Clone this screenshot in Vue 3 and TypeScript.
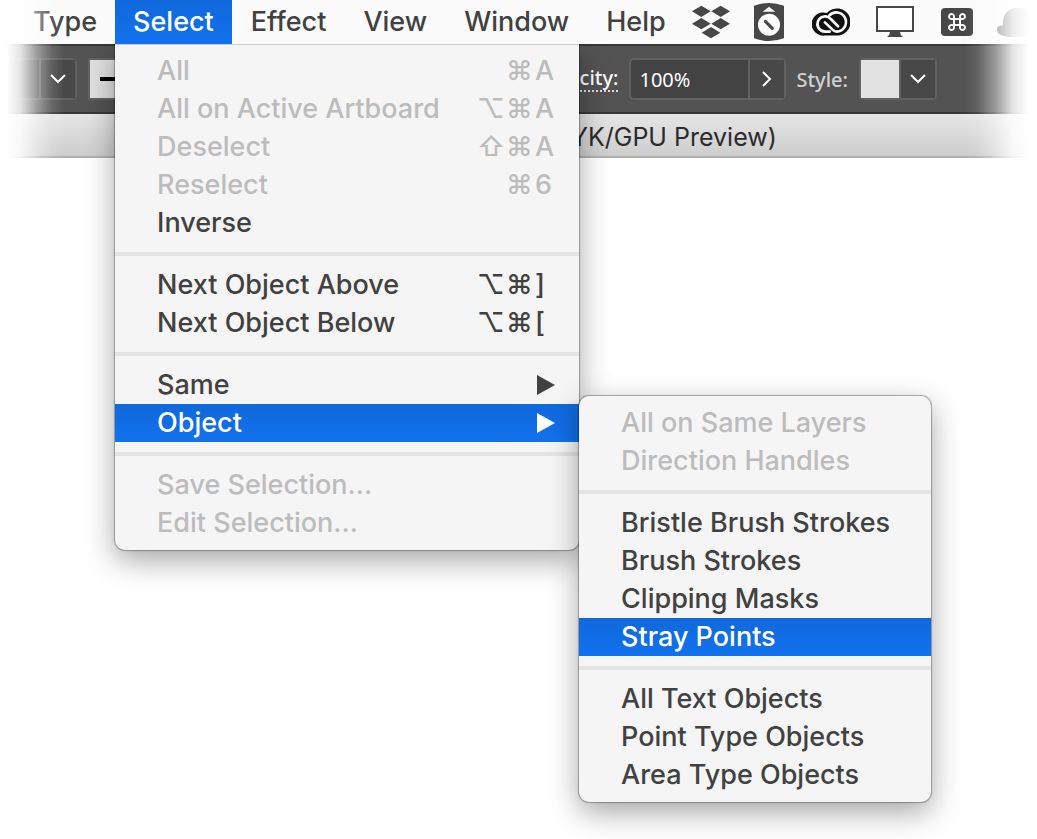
<script setup lang="ts">
interface Entry {
  label: string
  enabled: boolean
  active?: boolean
  shortcut?: string[]
  submenu?: Entry[][]
  opens?: boolean
}

const objectMenu: Entry[][] = [
  [
    { label: 'All on Same Layers', enabled: false },
    { label: 'Direction Handles', enabled: false },
  ],
  [
    { label: 'Bristle Brush Strokes', enabled: true },
    { label: 'Brush Strokes', enabled: true },
    { label: 'Clipping Masks', enabled: true },
    { label: 'Stray Points', enabled: true, active: true },
  ],
  [
    { label: 'All Text Objects', enabled: true },
    { label: 'Point Type Objects', enabled: true },
    { label: 'Area Type Objects', enabled: true },
  ],
]

const selectMenu: Entry[][] = [
  [
    { label: 'All', enabled: false, shortcut: ['⌘', 'A'] },
    { label: 'All on Active Artboard', enabled: false, shortcut: ['⌥', '⌘', 'A'] },
    { label: 'Deselect', enabled: false, shortcut: ['⇧', '⌘', 'A'] },
    { label: 'Reselect', enabled: false, shortcut: ['⌘', '6'] },
    { label: 'Inverse', enabled: true },
  ],
  [
    { label: 'Next Object Above', enabled: true, shortcut: ['⌥', '⌘', ']'] },
    { label: 'Next Object Below', enabled: true, shortcut: ['⌥', '⌘', '['] },
  ],
  [
    { label: 'Same', enabled: true, opens: true },
    { label: 'Object', enabled: true, active: true, opens: true, submenu: objectMenu },
  ],
  [
    { label: 'Save Selection...', enabled: false },
    { label: 'Edit Selection...', enabled: false },
  ],
]

const titles: string[] = ['Type', 'Select', 'Effect', 'View', 'Window', 'Help']
</script>

<template>
  <div class="screen">
    <header class="chrome">
      <nav class="menubar">
        <ul class="titles">
          <li v-for="title in titles" :key="title" class="title-item">
            <button type="button" class="title" :class="{ open: title === 'Select' }">{{ title }}</button>
            <div v-if="title === 'Select'" class="menu dropdown">
              <ul v-for="(group, g) in selectMenu" :key="g" class="group">
                <li v-for="entry in group" :key="entry.label" class="entry">
                  <button type="button" class="row" :class="{ active: entry.active }" :disabled="!entry.enabled">
                    <span>{{ entry.label }}</span>
                    <span v-if="entry.shortcut" class="keys">
                      <kbd v-for="key in entry.shortcut" :key="key" class="key">{{ key }}</kbd>
                    </span>
                    <svg v-if="entry.opens" class="arrow" viewBox="0 0 18 20" aria-hidden="true">
                      <path d="M0 0L18 10L0 20Z" />
                    </svg>
                  </button>
                  <div v-if="entry.submenu" class="menu submenu">
                    <ul v-for="(subgroup, s) in entry.submenu" :key="s" class="group">
                      <li v-for="sub in subgroup" :key="sub.label" class="entry">
                        <button type="button" class="row" :class="{ active: sub.active }" :disabled="!sub.enabled">
                          <span>{{ sub.label }}</span>
                        </button>
                      </li>
                    </ul>
                  </div>
                </li>
              </ul>
            </div>
          </li>
        </ul>
        <div class="status">
          <svg class="ico-box" viewBox="36 17 114 100" aria-label="Dropbox">
            <path d="M64 18L92 35L64 52L36 35ZM122 18L150 35L122 52L94 35ZM64 55L92 72L64 89L36 72ZM122 55L150 72L122 89L94 72ZM93 82L121 99L93 116L65 99Z" />
          </svg>
          <svg class="ico-timer" viewBox="222 12 90 114" aria-label="Timer">
            <path d="M222 20Q267 4 312 20V118Q267 134 222 118Z" />
            <path class="light" d="M248 38H286L267 23Z" />
            <circle class="light" cx="267" cy="77" r="33" />
            <path class="needle" d="M256 67L277 88" />
          </svg>
          <svg class="ico-cloud" viewBox="395 20 115 82" aria-label="Creative Cloud">
            <path class="ink" d="M433 102A35 35 0 1 1 440 34A41 41 0 1 1 470 102Z" />
            <path class="ring" d="M449 90H434A23 23 0 1 1 452 52L474 74" />
            <path class="ring" d="M447 42A29 29 0 1 1 470 90Q463 90 457 84L434 62" />
          </svg>
          <svg class="ico-screen" viewBox="0 0 38 32" aria-label="Display">
            <path class="frame" d="M1 1H37V25H1Z" />
            <path d="M14 26H24Q24 29 27 31H11Q14 29 14 26Z" />
          </svg>
          <svg class="ico-cmd" viewBox="0 0 32 28" aria-label="Shortcuts">
            <rect width="32" height="28" rx="4" />
            <path class="loop" d="M13 11V9A2.5 2.5 0 1 0 11 11H21A2.5 2.5 0 1 0 19 9V19A2.5 2.5 0 1 0 21 17H11A2.5 2.5 0 1 0 13 19Z" />
          </svg>
          <svg class="ico-hat" viewBox="0 0 40 31" aria-label="Bartender">
            <path d="M6 17Q6 1 21 1Q36 1 37 17L40 19V30H13Q0 29 0 23Q0 18 5 19Z" />
          </svg>
        </div>
      </nav>

      <div class="toolbar">
        <div class="stroke-tools">
          <div class="combo plain">
            <span class="blank"></span>
            <button type="button" class="drop" aria-label="Stroke weight">
              <svg class="chevron" viewBox="0 0 16 10"><path d="M1 1L8 8L15 1" /></svg>
            </button>
          </div>
          <button type="button" class="profile" aria-label="Stroke profile"><span class="dash"></span></button>
        </div>
        <div class="appearance">
          <label class="opacity" for="opacity">Opacity:</label>
          <div class="combo">
            <input id="opacity" class="value" type="text" value="100%" />
            <button type="button" class="drop" aria-label="Opacity slider">
              <svg class="angle" viewBox="0 0 10 16"><path d="M1 1L8 8L1 15" /></svg>
            </button>
          </div>
          <span class="style-label">Style:</span>
          <div class="combo">
            <span class="swatch"></span>
            <button type="button" class="drop" aria-label="Graphic style">
              <svg class="chevron" viewBox="0 0 16 10"><path d="M1 1L8 8L15 1" /></svg>
            </button>
          </div>
        </div>
      </div>

      <div class="document-title">(CMYK/GPU Preview)</div>
    </header>
  </div>
</template>

<style>
body {
  background: #fff;
}
</style>

<style scoped>
.screen {
  min-height: 100vh;
  font-family: Inter, "Liberation Sans", sans-serif;
  color: #414141;
}

button,
input {
  margin: 0;
  padding: 0;
  border: 0;
  background: none;
  font: inherit;
  color: inherit;
}

ul {
  margin: 0;
  padding: 0;
  list-style: none;
}

.chrome {
  position: relative;
}

.chrome::before,
.chrome::after {
  content: "";
  position: absolute;
  top: 0;
  bottom: 0;
  width: 72px;
  z-index: 1;
  pointer-events: none;
}

.chrome::before {
  left: 0;
  background: linear-gradient(to right, #fff 6px, rgba(255, 255, 255, 0.85) 20px, rgba(255, 255, 255, 0.4) 38px, rgba(255, 255, 255, 0.12) 52px, transparent 64px);
}

.chrome::after {
  right: 0;
  background: linear-gradient(to left, #fff 8px, rgba(255, 255, 255, 0.85) 24px, rgba(255, 255, 255, 0.4) 42px, rgba(255, 255, 255, 0.08) 60px, transparent 72px);
}

.menubar {
  display: flex;
  justify-content: space-between;
  height: 44px;
  background: #fbfbfb;
}

.titles {
  display: flex;
  padding-left: 15px;
}

.title-item {
  position: relative;
}

.title-item + .title-item + .title-item {
  margin-left: 1px;
}

.title {
  display: block;
  height: 44px;
  padding: 0 18px;
  font-size: 27px;
  font-weight: 500;
  line-height: 44px;
}

.title.open {
  background: linear-gradient(#1068dc, #1172ee);
  color: #fff;
}

.menu {
  position: absolute;
  padding: 8px 0;
  background: #f5f5f5;
  box-shadow: 0 0 1px 1px rgba(0, 0, 0, 0.3), 0 10px 30px rgba(0, 0, 0, 0.36);
}

.dropdown {
  top: 100%;
  left: 0;
  z-index: 2;
  width: 464px;
  padding-top: 7px;
  border-top: 1px solid #cbcbcb;
  border-radius: 0 0 10px 10px;
  clip-path: inset(0 -480px -480px -60px);
}

.submenu {
  top: -8px;
  left: 100%;
  width: 352px;
  border-radius: 10px;
}

.group + .group {
  margin-top: 10px;
  padding-top: 10px;
  border-top: 4px solid #e4e4e4;
}

.entry {
  position: relative;
}

.row {
  display: flex;
  align-items: center;
  justify-content: space-between;
  width: 100%;
  height: 38px;
  padding: 0 24px 0 42px;
  font-size: 27px;
  font-weight: 500;
  line-height: 38px;
  text-align: left;
  white-space: nowrap;
}

.row:disabled {
  color: #bcbcbc;
}

.row.active {
  background: linear-gradient(#1068dc, #1172ee);
  color: #fff;
}

.keys {
  display: flex;
}

.key {
  width: 29px;
  font: inherit;
}

.key:last-child {
  width: 20px;
}

.arrow {
  width: 18px;
  height: 20px;
  fill: currentColor;
}

.status {
  display: flex;
  align-items: center;
  fill: #474747;
}

.ico-box {
  width: 38px;
  height: 34px;
  margin-right: 24px;
}

.ico-timer {
  width: 30px;
  height: 38px;
  margin-right: 28px;
}

.ico-cloud {
  width: 38px;
  height: 28px;
  margin-right: 26px;
}

.ico-screen {
  width: 38px;
  height: 32px;
  margin-right: 27px;
}

.ico-cmd {
  width: 32px;
  height: 28px;
  margin-right: 24px;
}

.ico-hat {
  width: 40px;
  height: 31px;
  fill: #858585;
}

.light {
  fill: #fbfbfb;
}

.needle {
  fill: none;
  stroke: #474747;
  stroke-width: 9;
  stroke-linecap: round;
}

.ink {
  fill: #111;
}

.ring {
  fill: none;
  stroke: #fbfbfb;
  stroke-width: 8;
  stroke-linecap: round;
}

.frame {
  fill: #fff;
  stroke: #474747;
  stroke-width: 2;
}

.loop {
  fill: none;
  stroke: #fbfbfb;
  stroke-width: 2;
}

.toolbar {
  display: flex;
  align-items: center;
  justify-content: space-between;
  height: 66px;
  padding-right: 100px;
  border-top: 2px solid #383838;
  border-bottom: 2px solid #383838;
  background: #535353;
  color: #fff;
  font-family: "Noto Sans", sans-serif;
  font-size: 20px;
}

.stroke-tools,
.appearance {
  display: flex;
  align-items: center;
}

.combo {
  display: flex;
  height: 38px;
  border: 2px solid #626262;
  border-radius: 5px;
  background: #434343;
}

.plain {
  border-left: 0;
}

.blank {
  width: 39px;
  background: #4b4b4b;
}

.drop {
  display: flex;
  align-items: center;
  justify-content: center;
  width: 36px;
  border-left: 2px solid #626262;
  background: #484848;
}

.chevron {
  width: 16px;
  height: 10px;
}

.angle {
  width: 10px;
  height: 16px;
}

.chevron path,
.angle path {
  fill: none;
  stroke: #fff;
  stroke-width: 2;
}

.profile {
  display: flex;
  align-items: center;
  width: 80px;
  height: 42px;
  margin-left: 11px;
  padding-left: 10px;
  border: 2px solid #626262;
  background: #e0e0e0;
}

.dash {
  width: 56px;
  height: 4px;
  background: #000;
}

.opacity {
  margin-right: 11px;
  border-bottom: 2px dotted #ddd;
  font-weight: 500;
  line-height: 24px;
}

.value {
  width: 109px;
  padding-left: 8px;
}

.style-label {
  margin: 0 11px 0 10px;
  color: #d2d2d2;
  font-weight: 500;
}

.swatch {
  width: 38px;
  background: #e2e2e2;
}

.document-title {
  padding: 4px 0 0 521px;
  border-bottom: 2px solid #b0b0b0;
  background: linear-gradient(#e6e6e6, #cdcdcd);
  color: #2b2b2b;
  font-size: 25px;
  line-height: 38px;
  white-space: nowrap;
}
</style>
